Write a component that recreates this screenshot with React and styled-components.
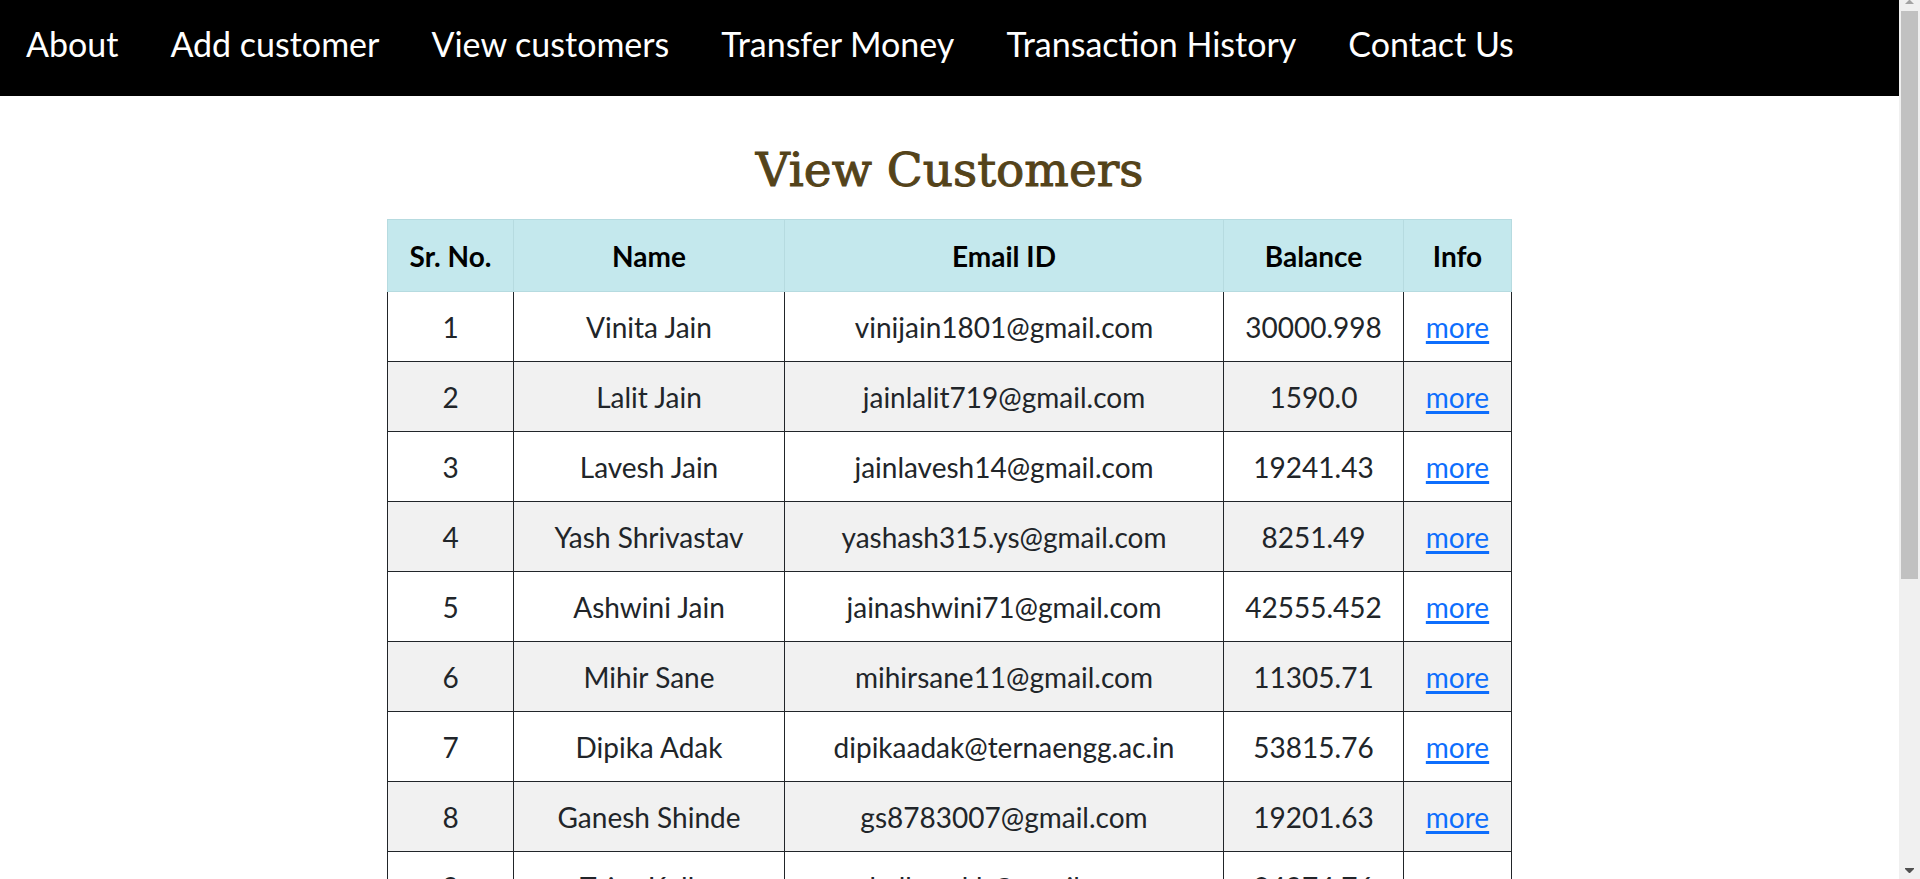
import React from "react";
import styled, { createGlobalStyle } from "styled-components";

const GlobalStyle = createGlobalStyle`
  * { box-sizing: border-box; }
  body {
    margin: 0;
    background: #fff;
    color: #212529;
    font-family: Lato, "Open Sans", sans-serif;
  }
`;

const Shell = styled.div`
  display: flex;
  height: 100vh;
`;

const Page = styled.div`
  flex: 1;
  min-width: 0;
  overflow-y: auto;
  scrollbar-width: none;
`;

const NavBar = styled.nav`
  display: flex;
  flex-wrap: wrap;
  min-height: 96px;
  padding-bottom: 8px;
  background: #000;
`;

const NavLink = styled.a`
  display: flex;
  align-items: center;
  padding: 0 26px;
  color: #fff;
  font-size: 34px;
  line-height: 40px;
  text-decoration: none;
`;

const Content = styled.main`
  display: flex;
  flex-direction: column;
  align-items: center;
  padding: 42px 0;
`;

const Title = styled.h1`
  margin: 0 0 17px;
  color: #54431a;
  font-family: "DejaVu Serif", serif;
  font-size: 47px;
  font-weight: 400;
  line-height: 64px;
  -webkit-text-stroke: 1px #54431a;
`;

const Table = styled.table`
  width: 1125px;
  max-width: 100%;
  table-layout: fixed;
  border-collapse: collapse;
  font-size: 28px;
  line-height: 40px;
  text-align: center;
`;

const Col = styled.col`
  width: ${(p) => p.$width}px;
`;

const HeadCell = styled.th`
  height: 72px;
  padding: 0;
  border: 1px solid #b6dbe0;
  background: #c4e8ed;
  color: #000;
  font-weight: 700;
`;

const Row = styled.tr`
  background: ${(p) => (p.$striped ? "#f1f1f1" : "#fff")};
`;

const Cell = styled.td`
  height: 70px;
  padding: 0;
  border: 1px solid #212529;
  border-top-width: ${(p) => (p.$first ? 0 : 1)}px;
`;

const MoreLink = styled.a`
  color: #0d6efd;
  text-decoration: underline;
  text-decoration-thickness: 3px;
  text-underline-offset: 3px;
`;

const ScrollTrack = styled.div`
  display: flex;
  flex-direction: column;
  flex: 0 0 21px;
  align-items: center;
  padding: 0 2px 5px 2px;
  background: #f0f0f0;
`;

const Thumb = styled.div`
  width: 17px;
  height: 65%;
  margin-bottom: auto;
  background: #c1c1c1;
`;

const Arrow = styled.svg`
  display: block;
  flex: none;
`;

const links = ["About", "Add customer", "View customers", "Transfer Money", "Transaction History", "Contact Us"];

const columns = [
  ["Sr. No.", 126],
  ["Name", 271],
  ["Email ID", 439],
  ["Balance", 180],
  ["Info", 108],
];

const customers = [
  ["Vinita Jain", "vinijain1801@gmail.com", "30000.998"],
  ["Lalit Jain", "jainlalit719@gmail.com", "1590.0"],
  ["Lavesh Jain", "jainlavesh14@gmail.com", "19241.43"],
  ["Yash Shrivastav", "yashash315.ys@gmail.com", "8251.49"],
  ["Ashwini Jain", "jainashwini71@gmail.com", "42555.452"],
  ["Mihir Sane", "mihirsane11@gmail.com", "11305.71"],
  ["Dipika Adak", "dipikaadak@ternaengg.ac.in", "53815.76"],
  ["Ganesh Shinde", "gs8783007@gmail.com", "19201.63"],
  ["Tejas Kolhe", "kolhesakh@gmail.com", "24974.76"],
];

export default function App() {
  return (
    <Shell>
      <GlobalStyle />
      <Page>
        <NavBar>
          {links.map((label) => (
            <NavLink key={label} href="#">{label}</NavLink>
          ))}
        </NavBar>
        <Content>
          <Title>View Customers</Title>
          <Table>
            <colgroup>
              {columns.map(([label, width]) => <Col key={label} $width={width} />)}
            </colgroup>
            <thead>
              <tr>
                {columns.map(([label]) => <HeadCell key={label} scope="col">{label}</HeadCell>)}
              </tr>
            </thead>
            <tbody>
              {customers.map(([name, email, balance], i) => (
                <Row key={email} $striped={i % 2 === 1}>
                  {[i + 1, name, email, balance].map((value, c) => (
                    <Cell key={c} $first={i === 0}>{value}</Cell>
                  ))}
                  <Cell $first={i === 0}><MoreLink href="#">more</MoreLink></Cell>
                </Row>
              ))}
            </tbody>
          </Table>
        </Content>
      </Page>
      <ScrollTrack aria-hidden="true">
        <Arrow width="17" height="11" viewBox="0 0 17 11">
          <path d="M4 4h9L9 0H8z" fill="#a3a3a3" />
        </Arrow>
        <Thumb />
        <Arrow width="17" height="6" viewBox="0 0 17 6">
          <path d="M4 0h9v1L9 5H8L4 1z" fill="#505050" />
        </Arrow>
      </ScrollTrack>
    </Shell>
  );
}
